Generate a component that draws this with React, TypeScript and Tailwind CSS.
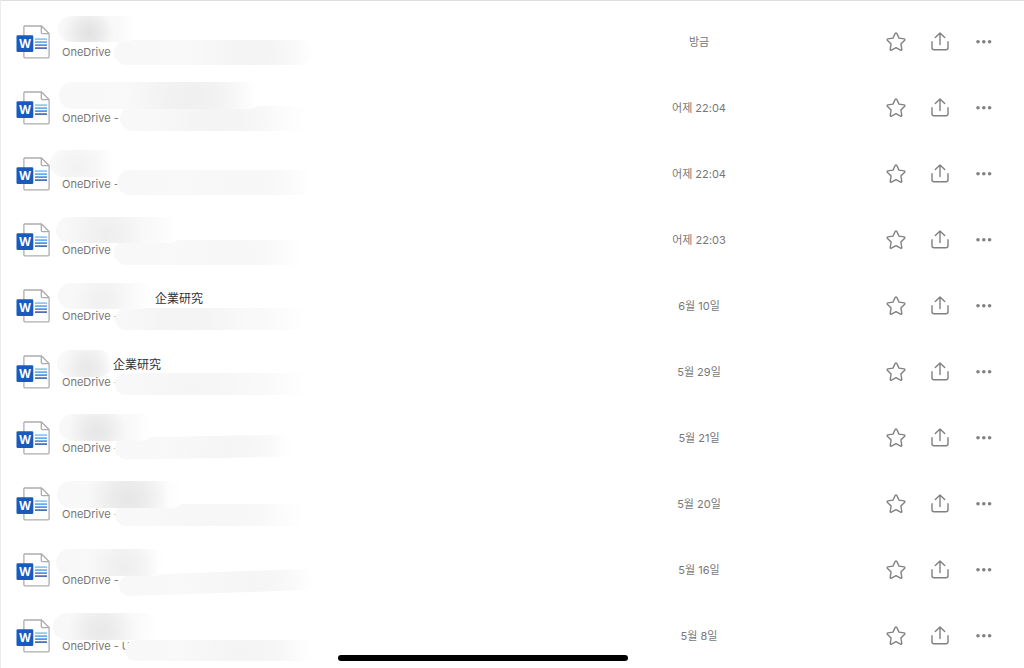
import React from 'react'

type Smudge = { x: number; y: number; w: number; h: number; tone: string; peak: number; tilt?: number }

type Doc = {
	id: number
	title?: string
	titlePad?: string
	location: string
	date: string
	name: Smudge
	path: Smudge
}

const docs: Doc[] = [
	{
		id: 1,
		location: 'OneDrive',
		date: '방금',
		name: { x: 57, y: 7, w: 80, h: 26, tone: '#e2e2e2', peak: 38 },
		path: { x: 113, y: 31, w: 199, h: 25, tone: '#f3f3f3', peak: 70 }
	},
	{
		id: 2,
		location: 'OneDrive -',
		date: '어제 22:04',
		name: { x: 58, y: 7, w: 204, h: 27, tone: '#efefef', peak: 65 },
		path: { x: 119, y: 31, w: 193, h: 25, tone: '#f3f3f3', peak: 50 }
	},
	{
		id: 3,
		location: 'OneDrive -',
		date: '어제 22:04',
		name: { x: 49, y: 9, w: 66, h: 27, tone: '#f2f2f2', peak: 42 },
		path: { x: 116, y: 29, w: 198, h: 25, tone: '#f7f7f7', peak: 65 }
	},
	{
		id: 4,
		location: 'OneDrive',
		date: '어제 22:03',
		name: { x: 55, y: 10, w: 126, h: 26, tone: '#eeeeee', peak: 40 },
		path: { x: 113, y: 33, w: 195, h: 25, tone: '#f7f7f7', peak: 60 }
	},
	{
		id: 5,
		title: '企業研究',
		titlePad: 'pl-[93px]',
		location: 'OneDrive -',
		date: '6월 10일',
		name: { x: 57, y: 10, w: 96, h: 26, tone: '#f0f0f0', peak: 45 },
		path: { x: 114, y: 35, w: 198, h: 22, tone: '#f3f3f3', peak: 35 }
	},
	{
		id: 6,
		title: '企業研究',
		titlePad: 'pl-[51px]',
		location: 'OneDrive -',
		date: '5월 29일',
		name: { x: 56, y: 11, w: 56, h: 27, tone: '#e8e8e8', peak: 55 },
		path: { x: 114, y: 34, w: 198, h: 22, tone: '#f5f5f5', peak: 40 }
	},
	{
		id: 7,
		location: 'OneDrive -',
		date: '5월 21일',
		name: { x: 58, y: 9, w: 95, h: 27, tone: '#e6e6e6', peak: 40 },
		path: { x: 114, y: 31, w: 186, h: 22, tone: '#f5f5f5', peak: 60, tilt: -1 }
	},
	{
		id: 8,
		location: 'OneDrive -',
		date: '5월 20일',
		name: { x: 56, y: 10, w: 129, h: 27, tone: '#e6e6e6', peak: 55 },
		path: { x: 114, y: 33, w: 196, h: 22, tone: '#f6f6f6', peak: 50 }
	},
	{
		id: 9,
		location: 'OneDrive -',
		date: '5월 16일',
		name: { x: 55, y: 12, w: 112, h: 27, tone: '#eeeeee', peak: 60 },
		path: { x: 118, y: 35, w: 200, h: 21, tone: '#f5f5f5', peak: 65, tilt: -2 }
	},
	{
		id: 10,
		location: 'OneDrive - U',
		date: '5월 8일',
		name: { x: 52, y: 10, w: 107, h: 27, tone: '#e8e8e8', peak: 45 },
		path: { x: 124, y: 37, w: 196, h: 21, tone: '#f4f4f4', peak: 60 }
	}
]

const WordIcon = () => (
	<svg className="shrink-0" width="34" height="34" viewBox="0 0 34 34" fill="none" aria-hidden="true">
		<path
			d="M8.6 1h16.9l7.6 7.6v23.2a1 1 0 0 1-1 1H8.9a1 1 0 0 1-1-1V1.7a.7.7 0 0 1 .7-.7Z"
			fill="#fff"
			stroke="#adadad"
			strokeWidth="1.3"
		/>
		<path d="M25.3 1v6.6a1 1 0 0 0 1 1H33" stroke="#adadad" strokeWidth="1.3" />
		<path d="M19 14.1h12" stroke="#83c5f5" strokeWidth="1.6" />
		<path d="M19 17.1h12" stroke="#5da6ea" strokeWidth="1.6" />
		<path d="M19 20.1h12" stroke="#4a86d6" strokeWidth="1.6" />
		<path d="M19 23.1h12" stroke="#3a62ae" strokeWidth="1.6" />
		<rect x="0.5" y="10.2" width="16.8" height="16.8" rx="1.3" fill="#185abd" />
		<text
			x="9"
			y="23"
			textAnchor="middle"
			fill="#fff"
			className="font-['Open_Sans','Noto_Sans',sans-serif] text-[12px] font-bold"
		>
			W
		</text>
	</svg>
)

const StarIcon = () => (
	<svg width="22" height="22" viewBox="0 0 22 22" fill="none" stroke="#808080" strokeWidth="1.4" aria-hidden="true">
		<path
			d="M10.3 2.3a.8.8 0 0 1 1.4 0l2.3 4.8 5.2.8a.8.8 0 0 1 .5 1.3l-3.8 3.8.9 5.3a.8.8 0 0 1-1.2.8L11 16.7l-4.6 2.4a.8.8 0 0 1-1.2-.8l.9-5.3-3.8-3.8a.8.8 0 0 1 .5-1.3l5.2-.8Z"
			strokeLinejoin="round"
		/>
	</svg>
)

const ShareIcon = () => (
	<svg
		width="22"
		height="22"
		viewBox="0 0 22 22"
		fill="none"
		stroke="#808080"
		strokeWidth="1.4"
		strokeLinecap="round"
		strokeLinejoin="round"
		aria-hidden="true"
	>
		<path d="M11 13.6V2M6.3 6.6 11 1.9l4.7 4.7" />
		<path d="M3 10.8v5.9a2 2 0 0 0 2 2h12a2 2 0 0 0 2-2v-5.9" />
	</svg>
)

const MoreIcon = () => (
	<svg width="22" height="22" viewBox="0 0 22 22" fill="#808080" aria-hidden="true">
		<circle cx="5" cy="10.7" r="1.8" />
		<circle cx="10.8" cy="10.7" r="1.8" />
		<circle cx="16.6" cy="10.7" r="1.8" />
	</svg>
)

const SmudgeShape = ({ id, smudge }: { id: string; smudge: Smudge }) => {
	const { x, y, w, h, tone, peak, tilt = 0 } = smudge
	const box = { x, y, width: w, height: h, rx: h / 2 }
	return (
		<g transform={`rotate(${tilt} ${x + w / 2} ${y + h / 2})`}>
			<defs>
				<linearGradient id={`${id}-base`}>
					<stop offset="0%" stopColor="#f8f8f8" />
					<stop offset="75%" stopColor="#f9f9f9" />
					<stop offset="97%" stopColor="#fff" />
				</linearGradient>
				<radialGradient
					id={`${id}-tone`}
					gradientUnits="userSpaceOnUse"
					cx={x + (w * peak) / 100}
					cy={y + h * 0.65}
					r={Math.max(w * 0.32, 26)}
				>
					<stop offset="0%" stopColor={tone} />
					<stop offset="40%" stopColor={tone} stopOpacity="0.7" />
					<stop offset="100%" stopColor={tone} stopOpacity="0" />
				</radialGradient>
			</defs>
			<rect {...box} fill={`url(#${id}-base)`} />
			<rect {...box} fill={`url(#${id}-tone)`} />
		</g>
	)
}

const Row = ({ doc }: { doc: Doc }) => (
	<li className="relative flex h-[66px] items-center pl-[15px] pr-[18px]">
		<WordIcon />
		<div className="ml-3 min-w-0 flex-1">
			<p className={`h-5 text-xs leading-6 text-[#333] ${doc.titlePad ?? ''}`}>{doc.title}</p>
			<p className="text-[11px] leading-[18px] text-[#777]">{doc.location}</p>
		</div>
		<span className="w-[350px] text-center text-[11px] text-[#777]">{doc.date}</span>
		<button type="button" aria-label="즐겨찾기" className="flex size-11 items-center justify-center">
			<StarIcon />
		</button>
		<button type="button" aria-label="공유" className="flex size-11 items-center justify-center">
			<ShareIcon />
		</button>
		<button type="button" aria-label="더 보기" className="flex size-11 items-center justify-center">
			<MoreIcon />
		</button>
		{/* hidden file name and account path */}
		<svg className="pointer-events-none absolute top-0 left-0" width="330" height="66" aria-hidden="true">
			<SmudgeShape id={`path-${doc.id}`} smudge={doc.path} />
			<SmudgeShape id={`name-${doc.id}`} smudge={doc.name} />
		</svg>
	</li>
)

const App = () => {
	return (
		<main className="relative h-screen overflow-hidden border-t border-l border-t-[#dedede] border-l-[#ececec] bg-white font-[Inter,'Noto_Sans_CJK_KR','Noto_Sans_CJK_JP',sans-serif]">
			<ul className="pt-2">
				{docs.map((doc) => (
					<Row key={doc.id} doc={doc} />
				))}
			</ul>
			<div className="absolute inset-x-0 bottom-[7px] flex justify-center pr-[60px]">
				<div className="h-[6px] w-[290px] rounded-full bg-black" />
			</div>
		</main>
	)
}

export default App
